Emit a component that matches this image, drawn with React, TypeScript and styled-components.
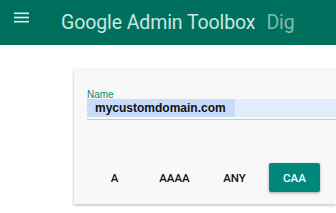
import React from "react";
import styled, { createGlobalStyle } from "styled-components";

const Global = createGlobalStyle`
  html, body { margin: 0; padding: 0; background: #ffffff; overflow: hidden; }
  body { font-family: Roboto, "Liberation Sans", Arial, sans-serif; width: 336px; height: 213px; }
`;

const Header = styled.header`
  height: 45px;
  background: #00705e;
  display: flex;
  align-items: center;
  padding-left: 14px;
  box-sizing: border-box;
`;

const Menu = styled.svg`
  width: 15px;
  height: 12px;
  margin-top: -9px;
  flex: none;
`;

const Title = styled.div`
  margin-left: 32px;
  display: flex;
  align-items: baseline;
  gap: 11px;
  font-family: Roboto, "Liberation Sans", sans-serif;
  font-size: 19.5px;
  letter-spacing: -0.1px;
  white-space: nowrap;
  margin-top: -1px;
`;

const Brand = styled.span`
  color: #c9e6e0;
`;

const Section = styled.span`
  color: #7fb9ae;
`;

const Main = styled.main`
  padding: 25px 0 6px 74px;
  overflow: hidden;
`;

const Card = styled.section`
  width: 262px;
  margin-right: -20px;
  height: 134px;
  box-sizing: border-box;
  background: #f8f8f8;
  box-shadow: 0 1px 3px rgba(0, 0, 0, 0.3);
  padding: 20px 0 0 13px;
  display: flex;
  flex-direction: column;
`;

const Label = styled.label`
  font-family: "Liberation Sans", Arial, sans-serif;
  font-size: 10px;
  line-height: 9px;
  height: 9px;
  color: #00897b;
`;

const Field = styled.div`
  padding-bottom: 2px;
  border-bottom: 1px solid #c3cad9;
`;

const Input = styled.div`
  height: 18px;
  background: #e3ecfc;
  display: flex;
  align-items: center;
`;

const Selected = styled.span`
  height: 18px;
  line-height: 18px;
  padding: 0 9px 0 8px;
  background: #c9dbfa;
  color: #111;
  font-family: "Liberation Sans", Arial, sans-serif;
  font-weight: bold;
  font-size: 12px;
`;

const Buttons = styled.div`
  display: flex;
  gap: 9px;
  margin-top: 43px;
  margin-left: 2px;
`;

const Btn = styled.button<{ $active?: boolean }>`
  width: 51px;
  height: 29px;
  border: none;
  border-radius: 2px;
  padding: 0;
  font-family: Roboto, "Liberation Sans", sans-serif;
  font-weight: 500;
  font-size: 11.5px;
  color: ${(p) => (p.$active ? "#ffffff" : "#111111")};
  background: ${(p) => (p.$active ? "#00897b" : "transparent")};
  box-shadow: ${(p) => (p.$active ? "0 1px 3px rgba(0,0,0,0.35)" : "none")};
`;

export default function App() {
  return (
    <>
      <Global />
      <Header>
        <Menu viewBox="0 0 15 12">
          <rect x="0" y="0.5" width="15" height="1.6" fill="#e4f1ee" />
          <rect x="0" y="4.7" width="15" height="1.6" fill="#e4f1ee" />
          <rect x="0" y="8.9" width="15" height="1.6" fill="#e4f1ee" />
        </Menu>
        <Title>
          <Brand>Google Admin Toolbox</Brand>
          <Section>Dig</Section>
        </Title>
      </Header>
      <Main>
        <Card>
          <Label>Name</Label>
          <Field>
            <Input>
              <Selected>mycustomdomain.com</Selected>
            </Input>
          </Field>
          <Buttons>
            <Btn>A</Btn>
            <Btn>AAAA</Btn>
            <Btn>ANY</Btn>
            <Btn $active>CAA</Btn>
          </Buttons>
        </Card>
      </Main>
    </>
  );
}
